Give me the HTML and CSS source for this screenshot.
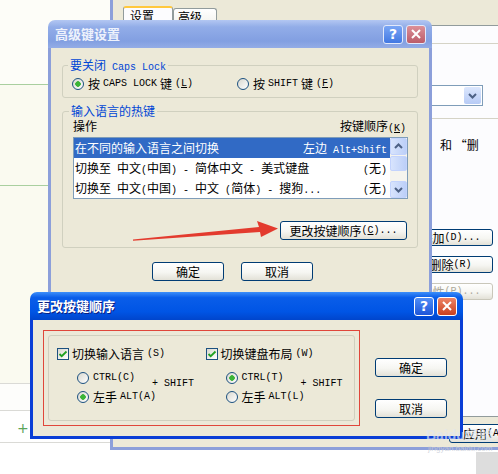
FILE: index.html
```html
<!DOCTYPE html>
<html lang="zh-CN">
<head>
  <meta charset="UTF-8">
  <title>高级键设置</title>
  <link rel="stylesheet" href="styles.css">
</head>
<body>
  <div class="desk">
    <div class="desk-top"></div>
    <div class="desk-mid"></div>
    <div class="desk-low"></div>
    <div class="desk-band"></div>
    <div class="desk-row"><span class="plus">+</span></div>
  </div>
  <div class="desk-corner"></div>

  <!-- window behind: text services -->
  <div class="bgwin">
    <div class="tabs">
      <div class="tab on">设置</div>
      <div class="tab">高级</div>
    </div>
    <div class="pane">
      <div class="side">
        <div class="rule"></div>
        <div class="combo">
          <span class="drop"><svg width="15" height="15" viewBox="0 0 15 15"><path d="M4 6l3.5 3.5L11 6" fill="none" stroke="#4d6185" stroke-width="2"/></svg></span>
        </div>
        <div class="rule r2"></div>
        <div class="note">和 “删</div>
        <div class="btn sbtn first">添加<span class="m">(D)...</span></div>
        <div class="btn sbtn">删除<span class="m">(R)</span></div>
        <div class="btn sbtn off">属性<span class="m">(P)...</span></div>
      </div>
    </div>
    <div class="btn apply">应用<span class="m">(A)</span></div>
  </div>

  <!-- 高级键设置 -->
  <div class="dlg inactive d1">
    <div class="title">
      <span>高级键设置</span>
      <div class="caps">
        <div class="cap help">?</div>
        <div class="cap close"><svg width="12" height="12" viewBox="0 0 12 12"><path d="M2 2l8 8M10 2l-8 8" stroke="#fff" stroke-width="2"/></svg></div>
      </div>
    </div>
    <div class="body">
      <fieldset class="grp g1">
        <legend>要关闭<span class="m"> Caps Lock</span></legend>
        <div class="caps-row">
          <div class="opt"><span class="radio on"></span>按<span class="m"> CAPS LOCK </span>键<span class="m">(<u>L</u>)</span></div>
          <div class="opt"><span class="radio"></span>按<span class="m"> SHIFT </span>键<span class="m">(<u>F</u>)</span></div>
        </div>
      </fieldset>

      <fieldset class="grp g2">
        <legend>输入语言的热键</legend>
        <div class="hdr">
          <span>操作</span>
          <span>按键顺序<span class="m">(<u>K</u>)</span></span>
        </div>
        <div class="list">
          <div class="rows">
            <div class="row sel">
              <span>在不同的输入语言之间切换</span>
              <span>左边<span class="m"> Alt+Shift</span></span>
            </div>
            <div class="row">
              <span>切换至<span class="m"> </span>中文<span class="m">(</span>中国<span class="m">) - </span>简体中文<span class="m"> - </span>美式键盘</span>
              <span><span class="m">(</span>无<span class="m">)</span></span>
            </div>
            <div class="row">
              <span>切换至<span class="m"> </span>中文<span class="m">(</span>中国<span class="m">) - </span>中文<span class="m"> (</span>简体<span class="m">) - </span>搜狗<span class="m">...</span></span>
              <span><span class="m">(</span>无<span class="m">)</span></span>
            </div>
          </div>
          <div class="sb">
            <div class="sb-btn"><svg width="15" height="15" viewBox="0 0 15 15"><path d="M4 9l3.5-3.5L11 9" fill="none" stroke="#4d6185" stroke-width="2"/></svg></div>
            <div class="sb-thumb"></div>
            <div class="sb-track"></div>
            <div class="sb-btn"><svg width="15" height="15" viewBox="0 0 15 15"><path d="M4 6l3.5 3.5L11 6" fill="none" stroke="#4d6185" stroke-width="2"/></svg></div>
          </div>
        </div>
        <div class="btn change">更改按键顺序<span class="m">(<u>C</u>)...</span></div>
      </fieldset>

      <div class="actions">
        <div class="btn">确定</div>
        <div class="btn">取消</div>
      </div>
    </div>
  </div>

  <!-- 更改按键顺序 -->
  <div class="dlg active d2">
    <div class="title">
      <span>更改按键顺序</span>
      <div class="caps">
        <div class="cap help">?</div>
        <div class="cap close"><svg width="12" height="12" viewBox="0 0 12 12"><path d="M2 2l8 8M10 2l-8 8" stroke="#fff" stroke-width="2"/></svg></div>
      </div>
    </div>
    <div class="body">
      <div class="mark">
        <div class="inner">
          <div class="col">
            <div class="opt"><span class="chk"><svg width="10" height="10" viewBox="0 0 10 10"><path d="M1.5 5l2.2 2.2L8.5 2.5" fill="none" stroke="#21a121" stroke-width="1.8"/></svg></span>切换输入语言<span class="m">(S)</span></div>
            <div class="radios">
              <div class="opt"><span class="radio"></span><span class="m">CTRL(C)</span></div>
              <div class="opt"><span class="radio on"></span>左手<span class="m"> ALT(A)</span></div>
              <span class="m shift">+ SHIFT</span>
            </div>
          </div>
          <div class="col">
            <div class="opt"><span class="chk"><svg width="10" height="10" viewBox="0 0 10 10"><path d="M1.5 5l2.2 2.2L8.5 2.5" fill="none" stroke="#21a121" stroke-width="1.8"/></svg></span>切换键盘布局<span class="m">(W)</span></div>
            <div class="radios">
              <div class="opt"><span class="radio on"></span><span class="m">CTRL(T)</span></div>
              <div class="opt"><span class="radio"></span>左手<span class="m"> ALT(L)</span></div>
              <span class="m shift">+ SHIFT</span>
            </div>
          </div>
        </div>
      </div>
      <div class="side-btns">
        <div class="btn">确定</div>
        <div class="btn">取消</div>
      </div>
    </div>
  </div>

  <svg class="arrow" width="498" height="474" viewBox="0 0 498 474">
    <polygon points="133,239.5 259,227 257,221 278,228.5 261,237 260,232 133,240.8" fill="#e33b2e"/>
  </svg>

  <div class="wm">Baidu经验<div class="wm-url">jingyan.baidu.com</div></div>
</body>
</html>
```

FILE: styles.css
```css
body {
  margin: 0;
  width: 498px;
  height: 474px;
  overflow: hidden;
  position: relative;
  background: #fff;
  font-family: "Noto Sans CJK SC", sans-serif;
  font-size: 12px;
  line-height: 14px;
  color: #000;
}

.m {
  font-family: "Liberation Mono", monospace;
  font-size: 10px;
  line-height: 10px;
}

/* desktop behind the windows */
.desk {
  position: absolute;
  left: 0;
  top: 0;
  width: 113px;
  display: flex;
  flex-direction: column;
}

.desk-top {
  height: 84px;
  background: #fdfdf8;
  border-bottom: 1px solid #a9cf9f;
}

.desk-mid {
  height: 100px;
  background: #fafaf0;
  border-bottom: 1px solid #a9cf9f;
}

.desk-low {
  height: 197px;
  background: #fafaf0;
  border-bottom: 1px solid #dadad6;
}

.desk-band {
  height: 26px;
  background: #fdfdfb;
  border-bottom: 1px solid #dadad6;
}

.desk-row {
  height: 31px;
  border-bottom: 1px solid #dadad6;
  display: flex;
  align-items: center;
  padding-left: 17px;
}

.plus {
  color: #5aa55a;
  font-family: "DejaVu Sans", sans-serif;
  font-size: 14px;
  margin-top: 2px;
}

.desk-corner {
  position: absolute;
  left: 476px;
  top: 452px;
  width: 22px;
  height: 22px;
  background: #dddddd;
}

/* background window */
.bgwin {
  position: absolute;
  left: 110px;
  top: 0;
  width: 420px;
  height: 450px;
  box-sizing: border-box;
  background: #ece9d8;
  border-left: 3px solid #8c9fda;
  border-bottom: 3px solid #8c9fda;
  display: flex;
  flex-direction: column;
}

.tabs {
  height: 25px;
  flex: none;
  display: flex;
  align-items: flex-end;
  padding-left: 10px;
}

.tab {
  width: 44px;
  height: 17px;
  box-sizing: border-box;
  border: 1px solid #919b9c;
  border-bottom: 0;
  border-radius: 3px 3px 0 0;
  background: linear-gradient(#fff, #f1f1ec);
  padding-left: 4px;
  line-height: 15px;
}

.tab.on {
  width: 50px;
  height: 19px;
  border-top: 2px solid #ffc83c;
  background: #fcfcfe;
  padding-left: 6px;
}

.pane {
  height: 392px;
  flex: none;
  box-sizing: border-box;
  margin-left: 3px;
  border: 1px solid #919b9c;
  background: #fcfcfe;
}

.side {
  margin-left: 183px;
  width: 200px;
  display: flex;
  flex-direction: column;
}

.rule {
  margin-top: 17px;
  border-top: 1px solid #d5d3c6;
}

.rule.r2 {
  margin-top: 12px;
}

.combo {
  margin-top: 41px;
  width: 183px;
  height: 21px;
  box-sizing: border-box;
  border: 1px solid #7f9db9;
  background: #fff;
  padding: 1px;
  display: flex;
  justify-content: flex-end;
}

.drop {
  width: 17px;
  border-radius: 2px;
  background: linear-gradient(#dce7fd, #b7cbf6);
  display: flex;
  align-items: center;
  justify-content: center;
}

.note {
  margin-top: 19px;
  padding-left: 140px;
}

.btn {
  height: 19px;
  box-sizing: border-box;
  border: 1px solid #003c74;
  border-radius: 3px;
  background: linear-gradient(#fff, #f6f6f2 55%, #e3e1d7);
  display: flex;
  align-items: center;
  justify-content: center;
  white-space: nowrap;
  flex: none;
}

.sbtn {
  margin-left: 108px;
  margin-top: 10px;
  width: 85px;
  height: 17px;
}

.sbtn.first {
  margin-top: 77px;
}

.sbtn.off {
  color: #aca899;
  border-color: #c9c7ba;
}

.apply {
  margin: 7px 0 0 336px;
  width: 70px;
}

/* dialogs */
.dlg {
  position: absolute;
  display: flex;
  flex-direction: column;
}

.d1 {
  left: 48px;
  top: 20px;
  width: 384px;
  height: 410px;
}

.d2 {
  left: 30px;
  top: 292px;
  width: 433px;
  height: 147px;
}

.title {
  height: 28px;
  flex: none;
  box-sizing: border-box;
  display: flex;
  align-items: center;
  padding: 0 6px 0 7px;
  border-radius: 7px 7px 0 0;
  font-size: 13px;
  font-weight: bold;
}

.inactive .title {
  background: linear-gradient(#b3c7f2, #92ade8 25%, #829fe1 75%, #93ace6);
  color: #eef2fc;
}

.active .title {
  background: linear-gradient(#3d8ffa, #0a5de9 20%, #0055e5 70%, #0045cc);
  color: #fff;
  text-shadow: 1px 1px #0b1e80;
}

.caps {
  margin-left: auto;
  display: flex;
  gap: 3px;
}

.cap {
  width: 20px;
  height: 19px;
  box-sizing: border-box;
  border: 1px solid #fff;
  border-radius: 3px;
  display: flex;
  align-items: center;
  justify-content: center;
  color: #fff;
  font-family: "DejaVu Sans", sans-serif;
  font-size: 14px;
  text-shadow: none;
}

.inactive .cap {
  border-color: #e2e9fb;
}

.inactive .help {
  background: linear-gradient(#7aa6f5, #4278e2);
}

.inactive .close {
  background: linear-gradient(#dc9098, #bb5c69);
}

.active .help {
  background: linear-gradient(#4f8ef7, #1d55d8);
}

.active .close {
  background: linear-gradient(#ee8466, #c8401f);
}

.body {
  flex: 1;
  background: #ece9d8;
  border: 3px solid #8c9fda;
  border-top: 0;
}

.active .body {
  border-color: #0a3ed6;
  display: flex;
  padding: 10px 0 0 10px;
}

.d1 .body {
  padding: 10px 11px 0;
}

/* group boxes */
.grp {
  margin: 0;
  min-width: 0;
  border: 1px solid #d0d0bf;
  border-radius: 3px;
}

.grp legend {
  color: #0046d5;
  padding: 0 2px;
  margin-left: -4px;
  line-height: 14px;
}

.g1 {
  padding: 4px 9px 6px 9px;
}

.g2 {
  margin-top: 6px;
  padding: 1px 9px 7px 10px;
}

.caps-row {
  display: flex;
}

.caps-row .opt:first-child {
  width: 165px;
}

.opt {
  display: flex;
  align-items: center;
  gap: 3px;
  white-space: nowrap;
  height: 14px;
}

.radio {
  width: 12px;
  height: 12px;
  flex: none;
  box-sizing: border-box;
  border: 1px solid #1c5180;
  border-radius: 50%;
  background: linear-gradient(135deg, #d9d8cf, #fff);
  margin-right: 1px;
}

.radio.on {
  background: radial-gradient(circle, #3cb437 0 2.5px, transparent 3px), linear-gradient(135deg, #d9d8cf, #fff);
}

.chk {
  width: 12px;
  height: 12px;
  flex: none;
  box-sizing: border-box;
  border: 1px solid #1c5180;
  background: linear-gradient(135deg, #d9d8cf, #fff);
  display: flex;
  align-items: center;
  justify-content: center;
}

.hdr {
  display: flex;
  justify-content: space-between;
  padding-right: 2px;
}

.list {
  margin-top: 3px;
  height: 62px;
  box-sizing: border-box;
  border: 1px solid #7f9db9;
  background: #fff;
  display: flex;
}

.rows {
  flex: 1;
  min-width: 0;
}

.row {
  height: 20px;
  display: flex;
  align-items: center;
  justify-content: space-between;
  padding: 0 3px 0 1px;
  white-space: nowrap;
}

.row.sel {
  background: #316ac5;
  color: #fff;
}

.sb {
  width: 17px;
  display: flex;
  flex-direction: column;
  background: #f5f4ee;
}

.sb-btn,
.sb-thumb {
  box-sizing: border-box;
  border: 1px solid #c3d3fd;
  border-radius: 2px;
  background: linear-gradient(90deg, #d8e4fd, #bccff8);
  display: flex;
  align-items: center;
  justify-content: center;
}

.sb-btn {
  height: 17px;
}

.sb-thumb {
  height: 15px;
  margin-top: 1px;
}

.sb-track {
  flex: 1;
}

.change {
  width: 127px;
  margin: 22px 1px 0 auto;
}

.actions {
  display: flex;
  gap: 17px;
  margin: 14px 0 0 90px;
}

.actions .btn,
.side-btns .btn {
  width: 72px;
}

/* second dialog */
.mark {
  width: 317px;
  height: 96px;
  box-sizing: border-box;
  border: 1px solid #e0473a;
  padding: 4px;
}

.inner {
  height: 100%;
  box-sizing: border-box;
  border: 1px solid #d0d0bf;
  border-radius: 3px;
  padding: 11px 0 0 8px;
  display: flex;
}

.col {
  width: 160px;
}

.radios {
  display: grid;
  grid-template-columns: 75px auto;
  row-gap: 5px;
  margin: 10px 0 0 20px;
}

.shift {
  grid-column: 2;
  grid-row: 1 / span 2;
  align-self: center;
  margin-bottom: 7px;
  white-space: pre;
}

.side-btns {
  margin: 28px 0 0 15px;
  display: flex;
  flex-direction: column;
  gap: 22px;
}

.arrow {
  position: absolute;
  left: 0;
  top: 0;
  pointer-events: none;
}

.wm {
  position: absolute;
  left: 426px;
  top: 426px;
  white-space: nowrap;
  color: rgba(225, 230, 238, 0.7);
  font-family: "Liberation Sans", "Noto Sans CJK SC", sans-serif;
  font-size: 14px;
  font-weight: bold;
  line-height: 18px;
  pointer-events: none;
}

.wm-url {
  font-size: 8px;
  line-height: 10px;
  font-weight: normal;
  color: rgba(200, 205, 215, 0.8);
  margin-left: 2px;
}
```
